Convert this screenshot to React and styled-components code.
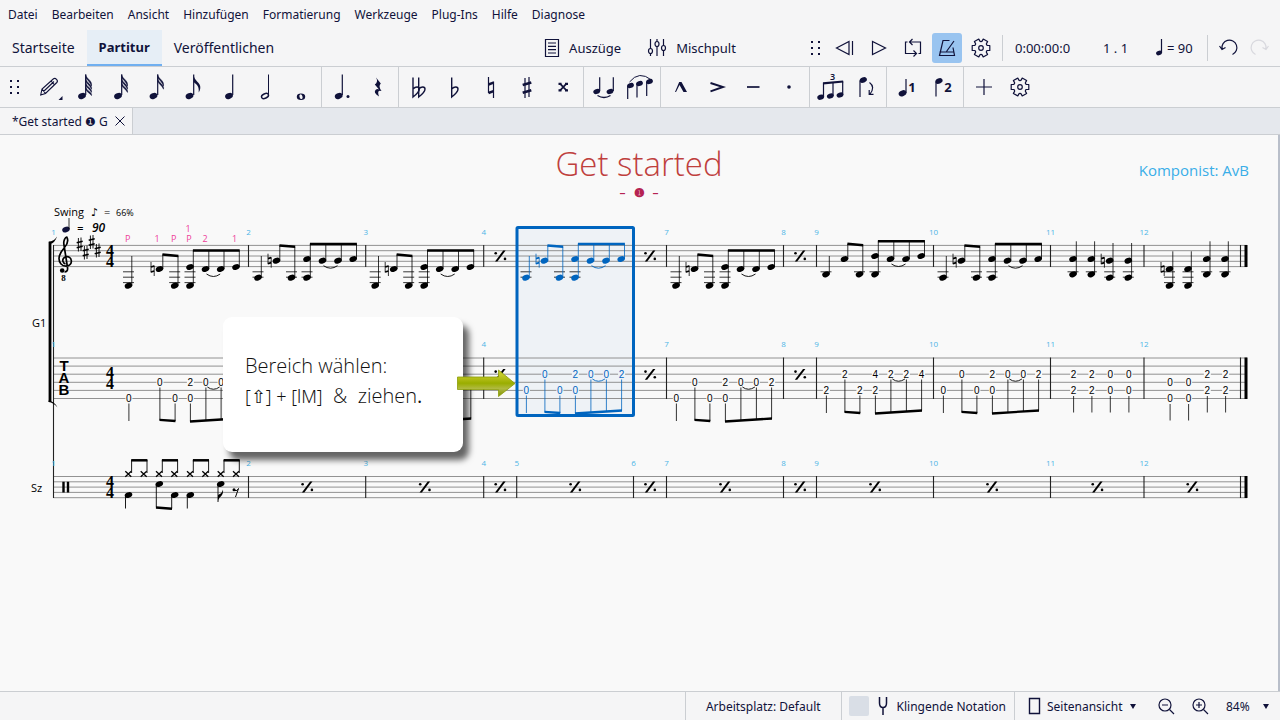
import React, { useState } from "react";
import styled, { createGlobalStyle } from "styled-components";

const INK = "#10123a";
const LINE = "#cbced2";
const BLUE = "#0065bf";
const HAND = '"Open Sans", "Noto Sans", sans-serif';

const GlobalStyle = createGlobalStyle`
  * {
    box-sizing: border-box;
  }
  body {
    margin: 0;
    background-color: #f5f5f6;
    color: ${INK};
    font-family: "Noto Sans", "Open Sans", sans-serif;
    font-size: 12px;
  }
  button, select {
    font: inherit;
    color: inherit;
    background: none;
    border: 0;
    padding: 0;
    margin: 0;
    cursor: pointer;
  }
`;

const Window = styled.div`
  min-height: 100vh;
  display: flex;
  flex-direction: column;
`;

const MenuBar = styled.nav`
  height: 30px;
  padding: 0 8px;
  display: flex;
  align-items: center;
  gap: 14px;
`;

const MenuButton = styled.button`
  line-height: 16px;
`;

const MainBar = styled.header`
  height: 37px;
  display: grid;
  grid-template-columns: 1fr auto 1fr;
  border-bottom: 1px solid ${LINE};
  font-size: 13px;
`;

const NavTabs = styled.nav`
  display: flex;
`;

const NavTab = styled.a`
  display: flex;
  align-items: center;
  padding: 0 12px;
  color: inherit;
  text-decoration: none;
  white-space: nowrap;
  font-size: ${({ $active }) => ($active ? 13 : 14)}px;
  border-bottom: 2px solid ${({ $active }) => ($active ? "#70aff0" : "transparent")};
  background-color: ${({ $active }) => ($active ? "#e6eef6" : "transparent")};
  font-weight: ${({ $active }) => ($active ? 700 : 400)};
`;

const CenterTools = styled.div`
  display: flex;
  align-items: center;
  gap: 26px;
`;

const TextButton = styled.button`
  display: flex;
  align-items: center;
  gap: 9px;
`;

const Transport = styled.div`
  display: flex;
  align-items: center;
  justify-content: flex-end;
  padding-right: 6px;
`;

const RoundButtons = styled.div`
  display: flex;
  align-items: center;
  gap: ${({ $gap }) => $gap}px;
`;

const IconButton = styled.button`
  width: 30px;
  height: ${({ $flat }) => ($flat ? 28 : 30)}px;
  display: grid;
  place-items: center;
  border-radius: 3px;
  background-color: ${({ $on }) => ($on ? "#99c4f0" : "transparent")};
  opacity: ${({ disabled }) => (disabled ? 0.12 : 1)};
`;

const Divider = styled.span`
  width: 1px;
  height: 26px;
  margin: 0 ${({ $right }) => $right}px 0 ${({ $left }) => $left}px;
  background-color: ${LINE};
`;

const Readout = styled.span`
  width: ${({ $width }) => $width}px;
  display: flex;
  align-items: center;
  white-space: pre;
`;

const ToolBar = styled.div`
  height: 41px;
  display: flex;
  border-bottom: 1px solid ${LINE};
`;

const ToolGroup = styled.div`
  display: flex;
  padding: 0 2px;
  border-right: ${({ $last }) => ($last ? "0" : `1px solid ${LINE}`)};
`;

const ToolButton = styled.button`
  width: 36px;
  height: 40px;
`;

const Grip = styled.span`
  width: ${({ $width }) => $width}px;
  display: grid;
  place-items: center;
`;

const Icon = styled.svg`
  display: block;
  fill: none;
  stroke: ${INK};
  stroke-width: 1.2;
  overflow: visible;
`;

const DotIcon = styled(Icon)`
  fill: ${INK};
  stroke: none;
`;

const CenteredIcon = styled(Icon)`
  margin: 0 auto;
`;

const DocTabs = styled.div`
  height: 27px;
  display: flex;
  background-color: #e5e8ed;
  border-bottom: 1px solid ${LINE};
`;

const DocTab = styled.div`
  display: flex;
  align-items: center;
  gap: 6px;
  padding: 0 6px 0 12px;
  background-color: #f5f5f6;
  border-right: 1px solid ${LINE};
`;

const Canvas = styled.main`
  flex: 1;
  background-color: #f9f9f9;
  border-right: 2px solid #b9bfca;
`;

const TitleArea = styled.header`
  height: 70px;
  padding: 6px 29px 0;
  display: grid;
  grid-template-columns: 1fr auto 1fr;
  font-family: ${HAND};
  font-weight: 300;
`;

const TitleBlock = styled.div`
  grid-column: 2;
  text-align: center;
`;

const Title = styled.h1`
  margin: 0;
  font-size: 33px;
  line-height: 46px;
  font-weight: 300;
  color: #bf403d;
`;

const Subtitle = styled.div`
  display: flex;
  justify-content: center;
  gap: 8px;
  font-size: 12px;
  line-height: 12px;
  font-weight: 600;
  color: #b52352;
`;

const Composer = styled.div`
  text-align: right;
  padding-top: 15px;
  font-size: 15px;
  line-height: 28px;
  color: #3aaee8;
  font-weight: 400;
`;

const ScoreArea = styled.div`
  position: relative;
`;

const ScoreSvg = styled.svg`
  display: block;
  width: 100%;
  height: auto;
`;

const Callout = styled.aside`
  position: absolute;
  left: 223px;
  top: 112px;
  width: 240px;
  height: 135px;
  padding: 34px 22px;
  background-color: #fff;
  border-radius: 9px;
  box-shadow: 6px 8px 6px rgba(0, 0, 0, 0.6);
  color: #111;
  font-family: ${HAND};
  font-weight: 300;
  font-size: 20px;
  line-height: 30px;
  white-space: nowrap;
`;

const Keys = styled.kbd`
  font-family: "Noto Sans", sans-serif;
  font-size: 18px;
  font-weight: 300;
`;

const Arrow = styled.svg`
  position: absolute;
  left: 457px;
  top: 164px;
`;

const StatusBar = styled.footer`
  height: 29px;
  display: flex;
  justify-content: flex-end;
  border-top: 1px solid ${LINE};
`;

const StatusGroup = styled.div`
  display: flex;
  align-items: center;
  gap: 4px;
  padding: 0 ${({ $right }) => $right}px 0 ${({ $left }) => $left}px;
  border-left: 1px solid ${LINE};
`;

const PitchLabel = styled.label`
  display: flex;
  align-items: center;
  gap: 7px;
`;

const PitchCheck = styled.input`
  appearance: none;
  width: 20px;
  height: 20px;
  margin: 0;
  border-radius: 2px;
  background-color: #d9dee6;
`;

const Picker = styled.label`
  display: flex;
  align-items: center;
  gap: 7px;
  margin: 0 7px;
`;

const Select = styled.select`
  appearance: none;
  width: ${({ $width }) => $width}px;
`;

const Caret = styled.span`
  width: 0;
  height: 0;
  margin-right: 4px;
  border-left: 3px solid transparent;
  border-right: 3px solid transparent;
  border-top: 5px solid ${INK};
`;

/* ---------- icons ---------- */

const GripIcon = () => (
  <DotIcon width="10" height="16">
    {[1, 7, 13].map((y) => [0, 7].map((x) => <rect key={x + "-" + y} x={x} y={y} width="2" height="2" />))}
  </DotIcon>
);

function gearPath(c) {
  const pts = [];
  for (let i = 0; i < 6; i++) {
    [[-16, 9.2], [16, 9.2], [21, 7], [30, 6.3], [39, 7]].forEach(([d, r]) => {
      const a = ((i * 60 + d) * Math.PI) / 180;
      pts.push(`${(c + r * Math.cos(a)).toFixed(1)} ${(c + r * Math.sin(a)).toFixed(1)}`);
    });
  }
  return "M" + pts.join("L") + "Z";
}

const GearIcon = () => (
  <CenteredIcon width="20" height="20">
    <path d={gearPath(10)} strokeLinejoin="round" />
    <circle cx="10" cy="10" r="2.3" />
  </CenteredIcon>
);

const Head = ({ x, y, r = 4 }) => (
  <ellipse cx={x} cy={y} rx={r} ry={r * 0.72} transform={`rotate(-22 ${x} ${y})`} fill="currentColor" stroke="none" />
);

const Flagged = ({ flags }) => (
  <>
    <Head x={flags > 2 ? 15 : 14.5} y={29} />
    <path d="M18.7 7.5V28" />
    {Array.from({ length: flags }, (_, i) =>
      flags === 1 ? (
        <path key={i} d="M18.7 8C19 14 26 15.5 25.3 21C25.1 23 24.5 24 23.7 25.5C24.5 18 20.5 17 18.7 15Z" fill="currentColor" stroke="none" />
      ) : (
        <path key={i} d={`M18.7 ${7.5 + i * 4}C19 ${12 + i * 4} 25.5 ${13 + i * 4} 24.5 ${19 + i * 3.2}C23 ${14.5 + i * 4} 20 ${13 + i * 4} 18.7 ${10.5 + i * 4}Z`} fill="currentColor" stroke="currentColor" strokeWidth="0.5" />
      )
    )}
  </>
);

const flat = "M14.7 10.5V30C18 27.5 21 25 21 22C21 19.5 17.5 19 14.7 22";

const toolGroups = [
  [
    ["Eingabe", <><path d="M9.7 28L11 22L22.5 11.8Q24 10.8 25.5 12.3Q27.2 14 25.8 15.5L14.5 26.5Z M11 22L14.5 26.5M20 14L23.5 17.8M12.5 24.5L23 14.5" strokeWidth="1.1" /><path d="M31.5 29V33H27.5Z" fill="currentColor" stroke="none" /></>],
    ["64tel", <Flagged flags={4} />],
    ["32tel", <Flagged flags={3} />],
    ["16tel", <Flagged flags={2} />],
    ["Achtel", <Flagged flags={1} />],
    ["Viertel", <><Head x={18} y={29} /><path d="M21.7 7.5V28" /></>],
    ["Halbe", <><ellipse cx="18" cy="29" rx="3.7" ry="2.2" transform="rotate(-25 18 29)" strokeWidth="1.4" /><path d="M21.5 7.5V28" strokeWidth="1" /></>],
    ["Ganze", <><ellipse cx="18" cy="29.7" rx="4.2" ry="3.2" fill="currentColor" stroke="none" /><ellipse cx="18" cy="29.7" rx="1.5" ry="2.4" transform="rotate(-20 18 29.7)" fill="#f5f5f6" stroke="none" /></>],
  ],
  [
    ["Punktiert", <><Head x={14.7} y={29} /><path d="M18.3 7.5V28" /><circle cx="24" cy="29.5" r="1.5" fill="currentColor" stroke="none" /></>],
    ["Pause", <path d="M16 10.5L20.8 16.5Q18 19 21.5 24Q16.5 22.5 19 29.5Q12.5 25.5 16 22.5Q17.5 21.7 19 22.5L14.8 17.5Q18.5 15 16 10.5Z" fill="currentColor" stroke="none" />],
  ],
  [
    ["Doppel-b", <><path d={flat} transform="translate(-2.7 0)" strokeWidth="1.4" /><path d={flat} transform="translate(3 0)" strokeWidth="1.4" /></>],
    ["b", <path d={flat} strokeWidth="1.4" />],
    ["Auflösungszeichen", <><path d="M15.5 10V26M20.5 14.5V31" /><path d="M15.5 17.5L20.5 15.7M15.5 26L20.5 24.2" strokeWidth="2.4" /></>],
    ["Kreuz", <><path d="M16 11V31M20 10V30" /><path d="M13.7 18L22.3 15.5M13.7 25.8L22.3 23.3" strokeWidth="2.6" /></>],
    ["Doppelkreuz", <><path d="M15 16.7L21.5 23.5M21.5 16.7L15 23.5" strokeWidth="1.8" /><path d="M13.5 15.7H16.5V18H13.5ZM20 15.7H23V18H20ZM13.5 22.2H16.5V24.5H13.5ZM20 22.2H23V24.5H20Z" fill="currentColor" stroke="none" /></>],
  ],
  [
    ["Haltebogen", <><Head x={10.7} y={24.5} r={3.5} /><Head x={24} y={24.5} r={3.5} /><path d="M13.7 10.3V24M27.3 10.3V24" /><path d="M11.5 28.5Q18 32.5 24.5 28.5" strokeWidth="1.4" /></>],
    ["Bindebogen", <><Head x={8.5} y={18.5} r={3.5} /><Head x={17.5} y={16.5} r={3.5} /><Head x={27.5} y={14.5} r={3.5} /><path d="M5.7 19V32M15 17V30.5M24.7 15V29" /><path d="M7.5 15Q17 3 29.5 13" strokeWidth="1" /></>],
  ],
  [
    ["Marcato", <path d="M12 25L16.2 15H18.5L24 25H20.5L16.5 18L13 25Z" fill="currentColor" stroke="none" />],
    ["Akzent", <path d="M11.5 16L24 20L11.5 24.3" strokeWidth="1.9" />],
    ["Tenuto", <path d="M12 20H24.5" strokeWidth="1.7" />],
    ["Staccato", <circle cx="18" cy="20" r="1.8" fill="currentColor" stroke="none" />],
  ],
  [
    ["Triole", <><text x="20.5" y="13" textAnchor="middle" fontSize="9" fontWeight="600" fill="currentColor" stroke="none">3</text><Head x={8.7} y={30.2} r={3.5} /><Head x={18.3} y={29} r={3.5} /><Head x={28} y={28} r={3.5} /><path d="M11.5 16V30M21 15.5V29M30.7 14.5V28" /><path d="M11 16.3L31.2 14.5" strokeWidth="2.2" /></>],
    ["Hals umkehren", <><Head x={15.3} y={13} r={3.7} /><path d="M12 13.5V30" /><path d="M21.5 15.5Q27.5 20 22 27M21.2 23V27.3H25.5" /></>],
  ],
  [
    ["Stimme 1", <><Head x={13.5} y={26.3} /><path d="M17 12V26" /><text x="23" y="25" textAnchor="middle" fontSize="13" fontWeight="700" fill="currentColor" stroke="none">1</text></>],
    ["Stimme 2", <><Head x={14} y={14} r={3.7} /><path d="M11 14.5V29.5" /><text x="23" y="25" textAnchor="middle" fontSize="13" fontWeight="700" fill="currentColor" stroke="none">2</text></>],
  ],
];

/* ---------- score ---------- */

const E = { low: 285.7, mid: 269, top: 267, beamA: [254.5, 256], beamB: 250.5, frets: ["0", "0", "0", "2", "0"], rows: [398.5, 382.5], tabY: 420, natural: true };
const A = { low: 277.7, mid: 260.7, top: 259, beamA: [245.5, 246.8], beamB: 244, frets: ["0", "0", "0", "2", "0"], rows: [390.5, 374.5], tabY: 412, natural: true };
const B = { low: 274.3, mid: 259, top: 256, beamA: [243.7, 245.2], beamB: 241.2, frets: ["2", "2", "2", "4", "2"], rows: [390.5, 374.5], tabY: 412, natural: false };

const spread = (x) => [9.5, 28, 43, 58.5, 74, 89.5, 104.7].map((d) => x + d);

const riffs = [
  { p: E, xs: [128.5, 159.5, 174.7, 190, 205.5, 220.7, 236] },
  { p: A, xs: spread(248.5) },
  { p: E, xs: spread(365.7) },
  { p: A, xs: spread(516.5), color: BLUE, paper: "#eef2f6" },
  { p: E, xs: spread(666.5) },
  { p: B, xs: spread(816.5) },
  { p: A, xs: spread(933.5) },
];

const chords = [
  [1073, 259, 274.3, "2", "2"], [1091.3, 259, 274.3, "2", "2"],
  [1109.7, 260.7, 277.7, "0", "0", true], [1128.3, 260.7, 277.7, "0", "0"],
  [1169.5, 269, 285.7, "0", "0", true], [1188, 269, 285.7, "0", "0"],
  [1206.7, 259, 274.3, "2", "2"], [1225, 259, 274.3, "2", "2"],
];

const bars = [53.5, 248.5, 365.7, 483.7, 516.7, 633.5, 666.5, 783.5, 816.5, 933.5, 1050.5, 1144, 1240.5];

// labels behind the callout and its arrow are left out
const isCovered = (x, y) => x > 223 && x < 475 && y > 317 && y < 452;

const NoteHead = ({ x, y }) => (
  <ellipse cx={x} cy={y} rx="3.9" ry="2.8" transform={`rotate(-22 ${x} ${y})`} fill="currentColor" />
);

const Ledgers = ({ x, low }) =>
  [271.8, 277.2, 282.6].filter((y) => y <= low + 1).map((y) => (
    <path key={y} d={`M${x - 5.5} ${y}H${x + 5.5}`} stroke="#222" strokeWidth="0.9" />
  ));

const Natural = ({ x, y }) => (
  <g stroke="currentColor">
    <path d={`M${x - 1.5} ${y - 7}V${y + 3.5}M${x + 1.7} ${y - 3.5}V${y + 7}`} strokeWidth="0.8" />
    <path d={`M${x - 1.5} ${y - 2}L${x + 1.7} ${y - 3}M${x - 1.5} ${y + 3}L${x + 1.7} ${y + 2}`} strokeWidth="1.8" />
  </g>
);

const Sharp = ({ x, y }) => (
  <g stroke="#000">
    <path d={`M${x - 1.3} ${y - 6.5}V${y + 7}M${x + 1.3} ${y - 7}V${y + 6.5}`} strokeWidth="0.9" />
    <path d={`M${x - 3} ${y - 1.7}L${x + 3} ${y - 3.2}M${x - 3} ${y + 3.2}L${x + 3} ${y + 1.7}`} strokeWidth="1.7" />
  </g>
);

const Fret = ({ x, y, paper = "#f9f9f9", children }) =>
  isCovered(x, y) ? null : (
    <g>
      <rect x={x - 3.5} y={y - 4.5} width="7" height="9" fill={paper} />
      <text x={x} y={y + 3.7} textAnchor="middle" fontFamily="Liberation Sans, sans-serif" fontSize="10" fill="currentColor">{children}</text>
    </g>
  );

const TimeSig = ({ y }) => (
  <g fontFamily="Liberation Serif, serif" fontWeight="700" fontSize="16" textAnchor="middle">
    <text x="110" y={y}>4</text>
    <text x="110" y={y + 10.7}>4</text>
  </g>
);

const Repeat = ({ x, y }) => (
  <g>
    <path d={`M${x - 5.2} ${y + 5.4}L${x + 3} ${y - 5.4}H${x + 5.4}L${x - 2.8} ${y + 5.4}Z`} />
    <circle cx={x - 4.5} cy={y - 2.7} r="1.3" />
    <circle cx={x + 4.8} cy={y + 2.9} r="1.3" />
  </g>
);

function Riff({ p, xs, color = "#000", paper }) {
  const s = xs.map((x) => x + 3.3);
  const t = xs.map((x) => x + 0.4);
  const { rows, tabY, frets } = p;
  const labels = [
    [0, 0, frets[0]], [1, 1, frets[1]], [2, 0, frets[2]], [3, 1, frets[3]],
    [3, 0, frets[2]], [4, 1, frets[4]], [5, 1, frets[4]], [6, 1, frets[3]],
  ];
  return (
    <g color={color}>
      {[0, 2, 3].map((i) => <Ledgers key={i} x={xs[i]} low={p.low} />)}
      {[0, 2, 3].map((i) => <NoteHead key={i} x={xs[i]} y={p.low} />)}
      <NoteHead x={xs[1]} y={p.mid} />
      <NoteHead x={xs[3]} y={p.top} />
      <NoteHead x={xs[4]} y={p.mid} />
      <NoteHead x={xs[5]} y={p.mid} />
      <NoteHead x={xs[6]} y={p.top} />
      {p.natural && <Natural x={xs[1] - 7} y={p.mid} />}
      <path
        d={`M${s[0]} ${p.low}V256M${s[1]} ${p.mid}V${p.beamA[0]}M${s[2]} ${p.low}V${p.beamA[1]}M${s[3]} ${p.low}V${p.beamB}M${s[4]} ${p.mid}V${p.beamB}M${s[5]} ${p.mid}V${p.beamB}M${s[6]} ${p.top}V${p.beamB}`}
        stroke="currentColor" strokeWidth="0.8"
      />
      <path d={`M${s[1] - 0.4} ${p.beamA[0]}L${s[2] + 0.4} ${p.beamA[1]}M${s[3] - 0.4} ${p.beamB}H${s[6] + 0.4}`} stroke="currentColor" strokeWidth="2.6" />
      <path d={`M${xs[4] + 1} ${p.mid + 5}Q${xs[4] + 8} ${p.mid + 10} ${xs[5] - 0.5} ${p.mid + 5}`} fill="none" stroke="currentColor" strokeWidth="0.9" />
      <path
        d={`M${t[0]} ${rows[0] + 5}V${tabY + 1}M${t[1]} ${rows[1] + 5}V${tabY}M${t[2]} ${rows[0] + 5}V${tabY + 1}M${t[3]} ${rows[0] + 5}V${tabY + 1.5}M${t[4]} ${rows[1] + 5}V${tabY + 1}M${t[5]} ${rows[1] + 5}V${tabY}M${t[6]} ${rows[1] + 5}V${tabY - 1.5}`}
        stroke="currentColor" strokeWidth="0.8"
      />
      <path d={`M${t[1] - 0.4} ${tabY - 0.2}L${t[2] + 0.4} ${tabY + 1}M${t[3] - 0.4} ${tabY + 1.5}L${t[6] + 0.4} ${tabY - 1.5}`} stroke="currentColor" strokeWidth="2.3" />
      {labels.map(([i, row, fret]) => (
        <Fret key={i + "-" + row} x={t[i]} y={rows[row]} paper={paper}>{fret}</Fret>
      ))}
      <path d={`M${t[4] + 1.5} ${rows[1] + 4.5}Q${t[4] + 7.5} ${rows[1] + 9} ${t[5] - 1.5} ${rows[1] + 4.5}`} fill="none" stroke="currentColor" strokeWidth="0.9" />
    </g>
  );
}

function Drums() {
  const xs = [128.3, 143.7, 159, 174.3, 190, 205.3, 220.7, 236];
  return (
    <g color="#000">
      {xs.map((x) => (
        <g key={x} stroke="#000">
          <path d={`M${x - 3} 471.3L${x + 3} 476.7M${x + 3} 471.3L${x - 3} 476.7`} strokeWidth="1.3" />
          <path d={`M${x + 3.3} 473V460`} strokeWidth="0.9" />
        </g>
      ))}
      {[0, 2, 4, 6].map((i) => (
        <path key={i} d={`M${xs[i] + 2.9} 460.3H${xs[i + 1] + 3.7}`} stroke="#000" strokeWidth="2.5" />
      ))}
      <NoteHead x={128.5} y={495} />
      <NoteHead x={159.3} y={484} />
      <NoteHead x={174.7} y={495} />
      <NoteHead x={190.3} y={495} />
      <NoteHead x={220.7} y={484} />
      <path d="M125.5 495.5V508.5M156.3 484.5V507.5M171.7 495.5V508.5M187.3 495.5V508.5M218 484.5V502" stroke="#000" strokeWidth="0.9" />
      <path d="M156 507.5L172 508.8" stroke="#000" strokeWidth="2.5" />
      <path d="M218 501.5C218 497 224 496.5 223 489.5C222 493.5 219.5 494 218 495Z" />
      <circle cx="234" cy="489.7" r="1.5" />
      <path d="M234 490.5Q237.5 491.5 238.5 488.5L235.5 497" fill="none" stroke="#000" strokeWidth="1" />
    </g>
  );
}

function Score() {
  const staff = [245.4, 250.7, 256, 261.3, 266.6];
  const tab = [358, 366.1, 374.2, 382.3, 390.4, 398.5];
  const drum = [476.5, 481.8, 487.1, 492.4, 497.7];
  return (
    <ScoreSvg viewBox="0 205 1278 310" role="img" aria-label="Partitur">
      <rect x="517" y="227.5" width="116.5" height="188" fill="#eef2f6" />
      {[...staff, ...tab, ...drum].map((y) => (
        <path key={y} d={`M53.5 ${y}H1247`} stroke="#868686" strokeWidth="0.9" />
      ))}
      <g stroke="#222" strokeWidth="1.1">
        <path d="M53.5 245V498" />
        {bars.slice(1).map((x) => (
          <path key={x} d={`M${x} 245V267M${x} 357.5V399M${x} 476V498`} />
        ))}
      </g>
      <path d="M1246 245V267M1246 357.5V399M1246 476V498" stroke="#000" strokeWidth="3" />
      <path d="M50 242V402" stroke="#000" strokeWidth="2.8" />
      <path d="M48.6 241.5Q54 241.5 57 236.5Q55 243 50 244ZM48.6 400.5Q54 401 57.5 407.5Q53.5 402.5 48.6 402Z" />

      <path
        d="M64.5 272C66.5 272 68 270.5 67.5 267.5L64 245C63 240.5 65.5 237 66.7 237C68.5 240 67.5 244 64.5 247.5C61 251.5 59 254.5 59 258.5C59 263 62 266.2 66 266.2C69.5 266.2 71.7 263.5 71.3 260.7C70.9 257.7 68.5 256.5 66.5 256.7C63.5 257 62.3 259.5 63 261.5C63.5 263 64.5 263.7 65.5 264"
        fill="none" stroke="#000" strokeWidth="1.7"
      />
      <circle cx="62.2" cy="270.5" r="2.3" />
      <text x="63.5" y="281" textAnchor="middle" fontFamily="Liberation Serif, serif" fontWeight="700" fontSize="9">8</text>
      <Sharp x={79.7} y={244.5} />
      <Sharp x={85.7} y={252.5} />
      <Sharp x={91.7} y={242} />
      <Sharp x={97.7} y={250.5} />
      <TimeSig y={255.8} />
      <TimeSig y={378.3} />
      <TimeSig y={487} />
      <g fontFamily="Liberation Sans, sans-serif" fontWeight="700" fontSize="15" textAnchor="middle">
        <text x="64" y="371">T</text>
        <text x="64" y="383">A</text>
        <text x="64" y="395">B</text>
      </g>
      <path d="M63.5 481.7V492.5M68 481.7V492.5" stroke="#000" strokeWidth="2.4" />

      <g fontFamily={HAND} fontWeight="400">
        <text x="54" y="216" fontSize="11">Swing</text>
        <text x="91" y="216" fontSize="11" fontFamily="DejaVu Sans, sans-serif">♪</text>
        <text x="104" y="216" fontSize="11">=</text>
        <text x="116" y="216" fontSize="9">66%</text>
        <text x="77" y="232" fontSize="11" fontStyle="italic" fontWeight="600">=</text>
        <text x="92" y="232" fontSize="12" fontStyle="italic" fontWeight="600">90</text>
        <text x="32" y="327" fontSize="11">G1</text>
        <text x="31" y="492" fontSize="11">Sz</text>
      </g>
      <NoteHead x={66} y={229.5} />
      <path d="M69 229V218" stroke="#000" strokeWidth="0.8" />
      <g fontFamily={HAND} fontSize="9" fill="#ee3f9a" textAnchor="middle">
        {[["P", 127.7, 242], ["1", 157, 242], ["P", 173.7, 242], ["P", 189, 242], ["1", 188, 232], ["2", 205, 242], ["1", 234.5, 242]].map(([t, x, y]) => (
          <text key={x} x={x} y={y}>{t}</text>
        ))}
      </g>
      <g fontFamily={HAND} fontSize="8" fill="#4cb5e6" textAnchor="middle">
        {bars.slice(0, 12).map((x, i) =>
          [235, 347, 466]
            .filter((y) => y === 466 || (i !== 4 && i !== 5))
            .filter((y) => !isCovered(x, y))
            .map((y) => <text key={x + "-" + y} x={x} y={y}>{i + 1}</text>)
        )}
      </g>

      {riffs.map((riff) => <Riff key={riff.xs[0]} {...riff} />)}
      {chords.map(([x, hi, low, a, b, nat]) => {
        const row = low > 280 ? 8 : 0;
        return (
          <g key={x} color="#000">
            <Ledgers x={x} low={low} />
            <NoteHead x={x} y={hi} />
            <NoteHead x={x} y={low} />
            {nat && <Natural x={x - 7} y={hi} />}
            <path d={`M${x + 3.3} ${low}V${hi - 17.7}M${x + 0.6} ${396 + row}V${412.5 + row}`} stroke="#000" strokeWidth="0.8" />
            <Fret x={x + 0.6} y={374.5 + row}>{a}</Fret>
            <Fret x={x + 0.6} y={390.5 + row}>{b}</Fret>
          </g>
        );
      })}
      {[3, 5, 7].map((i) => {
        const x = (bars[i] + bars[i + 1]) / 2;
        return <g key={i}><Repeat x={x} y={256} /><Repeat x={x} y={374.3} /></g>;
      })}
      {bars.slice(1, 12).map((x, i) => <Repeat key={x} x={(x + bars[i + 2]) / 2} y={487} />)}
      <Drums />
      <rect x="517" y="227.5" width="116.5" height="188" rx="1" fill="none" stroke={BLUE} strokeWidth="3" />
    </ScoreSvg>
  );
}

const menus = ["Datei", "Bearbeiten", "Ansicht", "Hinzufügen", "Formatierung", "Werkzeuge", "Plug-Ins", "Hilfe", "Diagnose"];

function App() {
  const [metronome, setMetronome] = useState(true);
  const [tool, setTool] = useState(null);

  return (
    <Window>
      <GlobalStyle />
      <MenuBar>
        {menus.map((m) => <MenuButton key={m}>{m}</MenuButton>)}
      </MenuBar>

      <MainBar>
        <NavTabs>
          <NavTab href="#start">Startseite</NavTab>
          <NavTab href="#score" $active>Partitur</NavTab>
          <NavTab href="#publish">Veröffentlichen</NavTab>
        </NavTabs>
        <CenterTools>
          <TextButton>
            <Icon width="16" height="20"><path d="M1.5 1.5H14.5V18.5H1.5ZM4 5H12M4 8.3H12M4 11.6H12M4 15H12" /></Icon>
            Auszüge
          </TextButton>
          <TextButton>
            <Icon width="20" height="20">
              <path d="M3.5 1V10.5M3.5 15.5V18M10 1V3.5M10 8.5V18M16.5 1V7.5M16.5 12.5V18" />
              <ellipse cx="3.5" cy="13" rx="2" ry="2.5" /><ellipse cx="10" cy="6" rx="2" ry="2.5" /><ellipse cx="16.5" cy="10" rx="2" ry="2.5" />
            </Icon>
            Mischpult
          </TextButton>
        </CenterTools>
        <Transport>
          <Grip $width={28}><GripIcon /></Grip>
          <RoundButtons $gap={4}>
            <IconButton aria-label="Zurückspulen"><Icon width="20" height="18"><path d="M14 2.5V15.5L1.5 9ZM17.5 2V16" /></Icon></IconButton>
            <IconButton aria-label="Wiedergabe"><Icon width="18" height="18"><path d="M2.5 2.5V15.5L15.5 9Z" /></Icon></IconButton>
            <IconButton aria-label="Schleife"><Icon width="20" height="20"><path d="M4.5 4H2.5V15.5H13M10.5 12.5L13.5 15.5L10.5 18.5M15.5 15.5H17.5V4H7M9.5 1L6.5 4L9.5 7" /></Icon></IconButton>
            <IconButton aria-label="Metronom" aria-pressed={metronome} $on={metronome} onClick={() => setMetronome(!metronome)}>
              <Icon width="20" height="20"><path d="M12.5 2.5H6L2.5 17.5H17.5L16 9.5M9.5 13.5L17 3M2.5 14H17" /></Icon>
            </IconButton>
            <IconButton aria-label="Wiedergabe-Einstellungen"><GearIcon /></IconButton>
          </RoundButtons>
          <Divider $left={6} $right={12} />
          <Readout $width={88}>0:00:00:0</Readout>
          <Readout $width={52}>1 . 1</Readout>
          <Readout $width={40}>
            <Icon width="12" height="20"><Head x={4} y={15} r={3} /><path d="M6.5 1V15" /></Icon>
            = 90
          </Readout>
          <Divider $left={12} $right={6} />
          <RoundButtons $gap={0}>
            <IconButton aria-label="Rückgängig"><Icon width="20" height="20"><path d="M3 11A7.5 7.5 0 1 1 13.5 16.5M0.5 8L3 11.5L6.5 9.5" /></Icon></IconButton>
            <IconButton aria-label="Wiederholen" disabled><Icon width="20" height="20"><path d="M17 11A7.5 7.5 0 1 0 6.5 16.5M19.5 8L17 11.5L13.5 9.5" /></Icon></IconButton>
          </RoundButtons>
        </Transport>
      </MainBar>

      <ToolBar role="toolbar">
        <Grip $width={29}><GripIcon /></Grip>
        {toolGroups.map((group, i) => (
          <ToolGroup key={i}>
            {group.map(([label, art]) => (
              <ToolButton key={label} aria-label={label} aria-pressed={tool === label} onClick={() => setTool(label)}>
                <Icon width="36" height="40">{art}</Icon>
              </ToolButton>
            ))}
          </ToolGroup>
        ))}
        <ToolGroup $last>
          <ToolButton aria-label="Hinzufügen"><Icon width="36" height="40"><path d="M10 20H26M18 12V28" /></Icon></ToolButton>
          <ToolButton aria-label="Anpassen"><GearIcon /></ToolButton>
        </ToolGroup>
      </ToolBar>

      <DocTabs>
        <DocTab>
          <button>*Get started ❶ G</button>
          <button aria-label="Schließen"><Icon width="12" height="12"><path d="M1.5 1.5L10.5 10.5M10.5 1.5L1.5 10.5" strokeWidth="1" /></Icon></button>
        </DocTab>
      </DocTabs>

      <Canvas>
        <TitleArea>
          <TitleBlock>
            <Title>Get started</Title>
            <Subtitle><span>–</span><span>❶</span><span>–</span></Subtitle>
          </TitleBlock>
          <Composer>Komponist: AvB</Composer>
        </TitleArea>
        <ScoreArea>
          <Score />
          <Callout>
            Bereich wählen:<br />
            <Keys>[⇧] + [lM]</Keys>&nbsp; &amp; &nbsp;ziehen<b>.</b>
          </Callout>
          <Arrow width="60" height="30">
            <defs>
              <linearGradient id="green" x1="0" y1="0" x2="0" y2="1">
                <stop offset="0.2" stopColor="#c3c926" />
                <stop offset="0.5" stopColor="#9aad00" />
                <stop offset="0.7" stopColor="#b0ba40" />
                <stop offset="1" stopColor="#7f9000" />
              </linearGradient>
            </defs>
            <path d="M0.5 8H41.5V1L58 14.5L41.5 27.5V20.5H0.5Z" fill="url(#green)" stroke="#8c9d08" strokeWidth="0.8" />
          </Arrow>
        </ScoreArea>
      </Canvas>

      <StatusBar>
        <StatusGroup $left={20} $right={20}>
          <button>Arbeitsplatz: Default</button>
        </StatusGroup>
        <StatusGroup $left={7} $right={8}>
          <PitchLabel>
            <PitchCheck type="checkbox" />
            <Icon width="14" height="20"><path d="M3.5 1V7Q3.5 11.5 7 11.5Q10.5 11.5 10.5 7V1M7 11.5V19" strokeWidth="1.5" /></Icon>
            Klingende Notation
          </PitchLabel>
        </StatusGroup>
        <StatusGroup $left={6} $right={0}>
          <Picker>
            <Icon width="12" height="18"><path d="M1.5 1.5H11.5V16.5H1.5Z" strokeWidth="1.4" /></Icon>
            <Select aria-label="Ansicht" $width={76} defaultValue="Seitenansicht"><option>Seitenansicht</option></Select>
            <Caret />
          </Picker>
          <IconButton $flat aria-label="Verkleinern"><Icon width="18" height="18"><circle cx="8" cy="8" r="6" /><path d="M12.5 12.5L17 17M5 8H11" /></Icon></IconButton>
          <IconButton $flat aria-label="Vergrößern"><Icon width="18" height="18"><circle cx="8" cy="8" r="6" /><path d="M12.5 12.5L17 17M5 8H11M8 5V11" /></Icon></IconButton>
          <Picker>
            <Select aria-label="Zoom" $width={30} defaultValue="84%"><option>84%</option></Select>
            <Caret />
          </Picker>
        </StatusGroup>
      </StatusBar>
    </Window>
  );
}

export default App;
